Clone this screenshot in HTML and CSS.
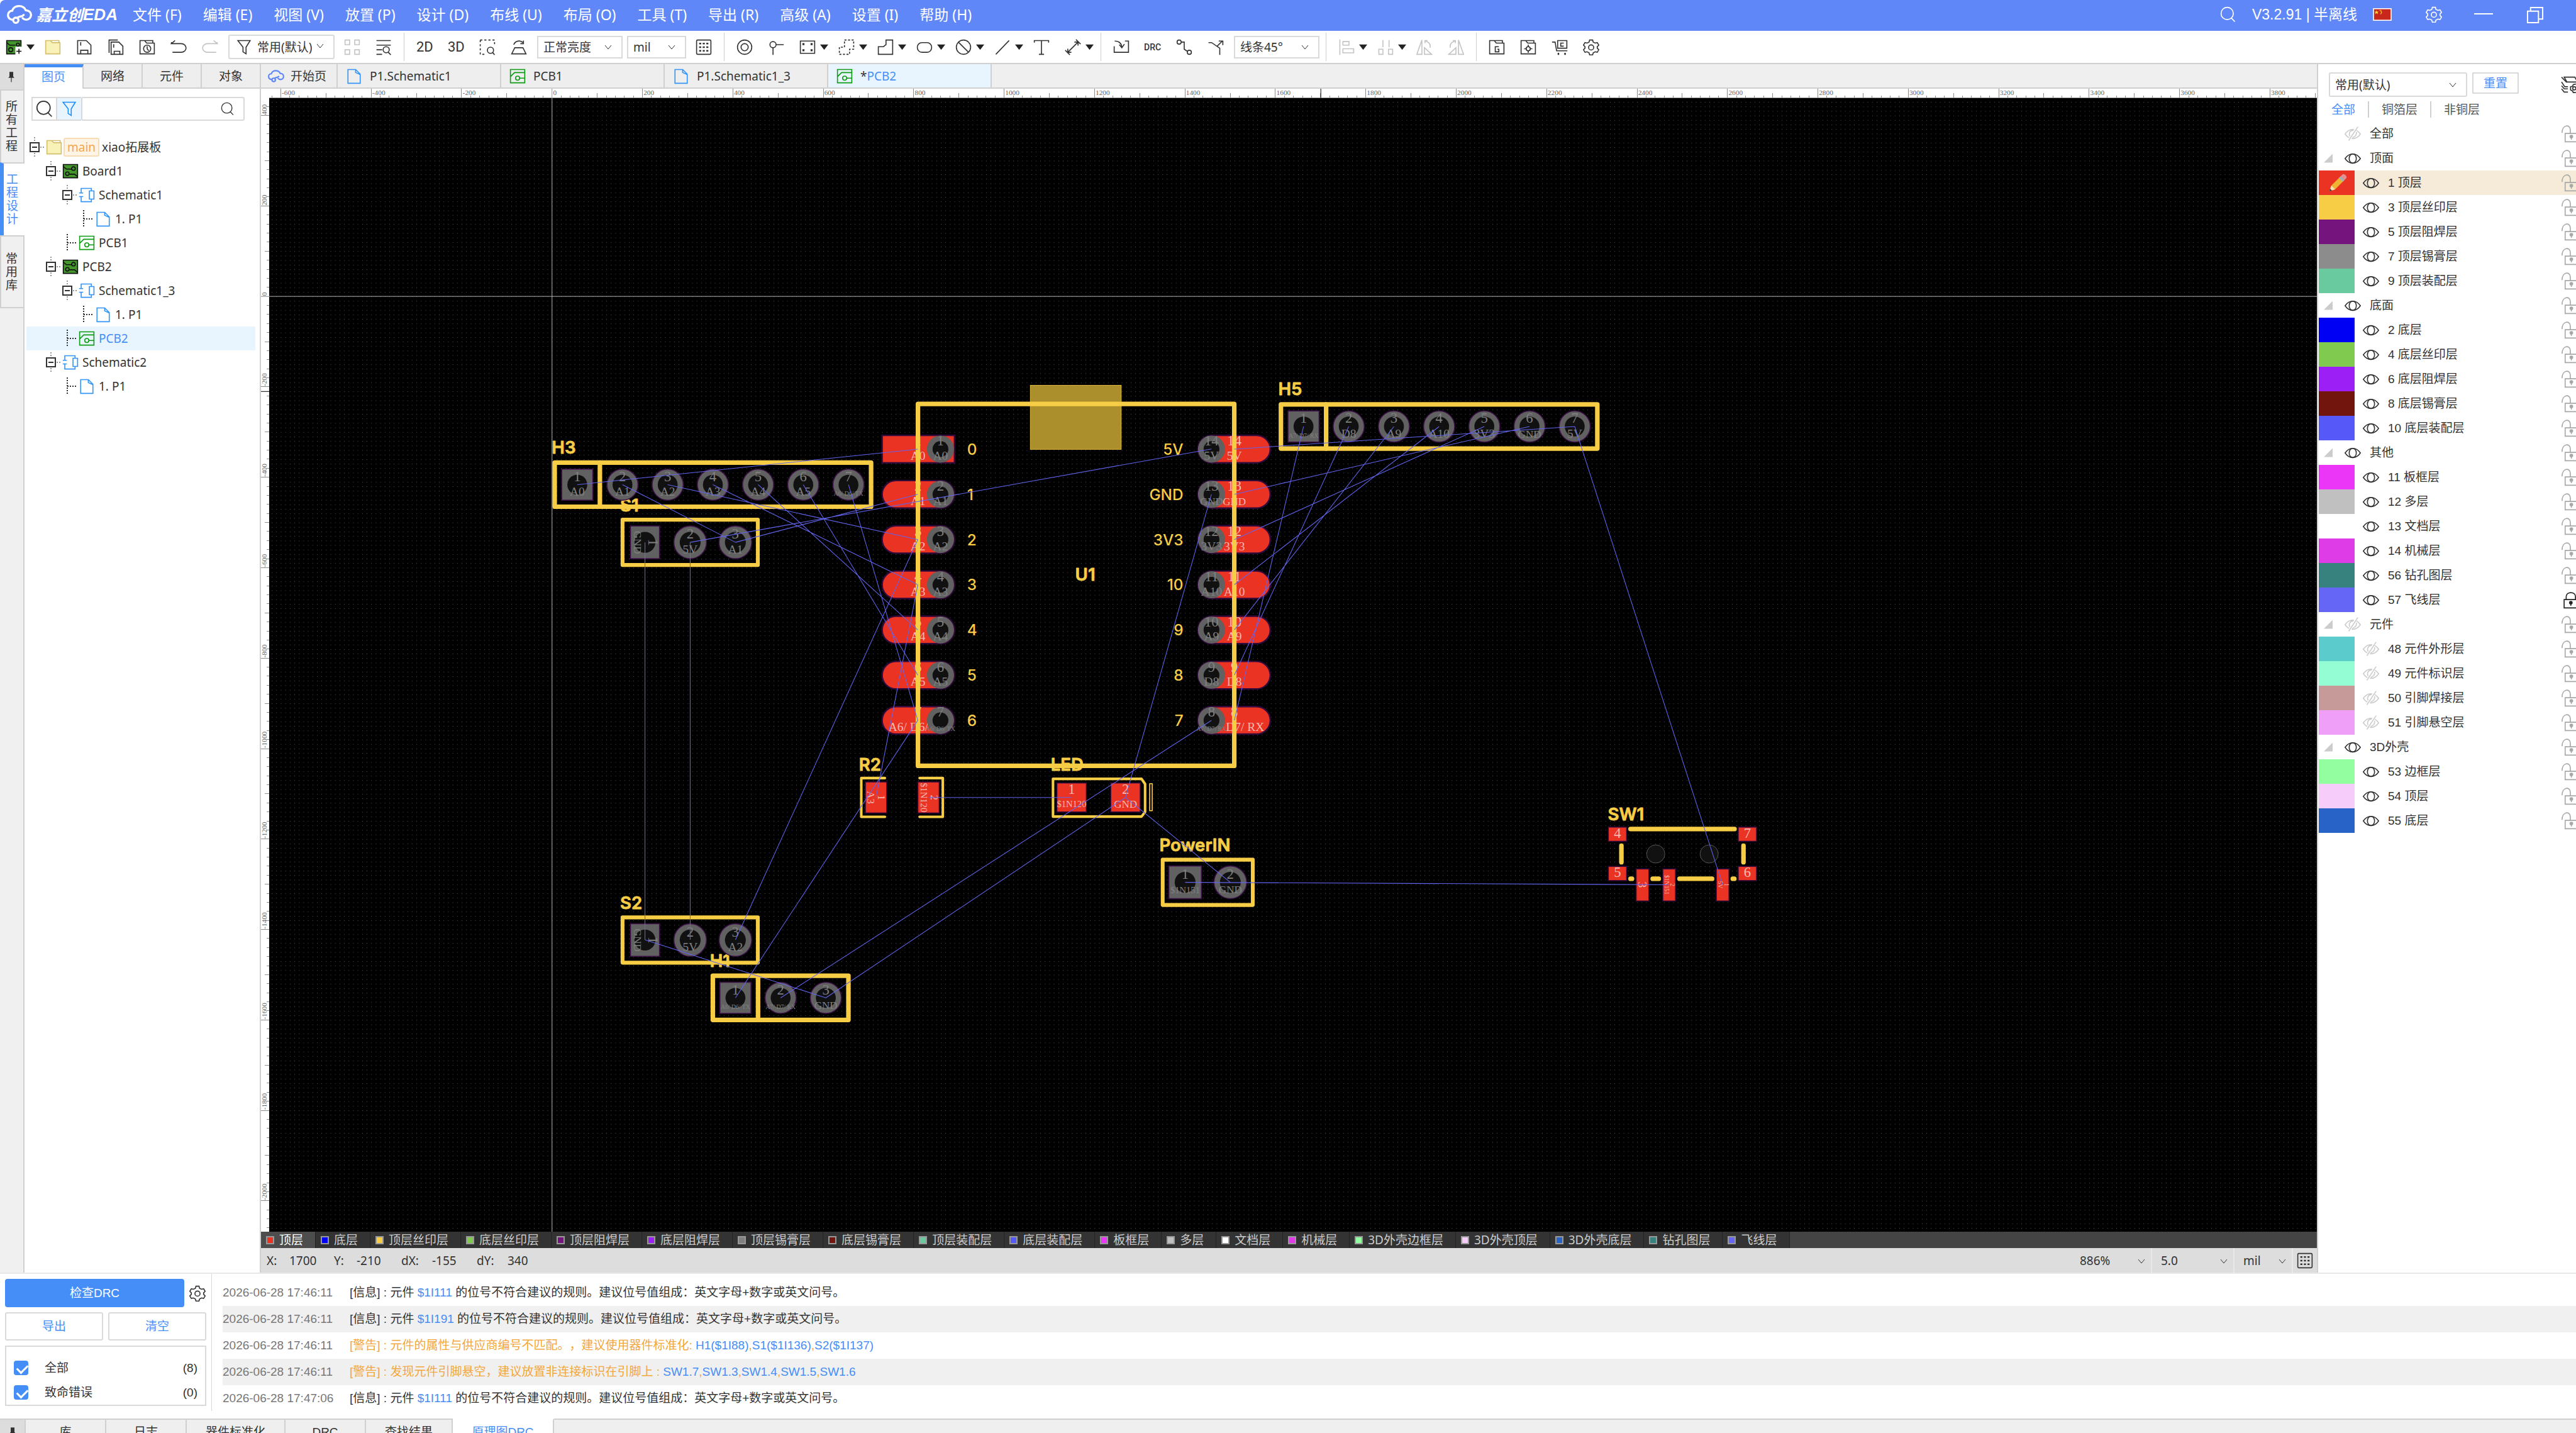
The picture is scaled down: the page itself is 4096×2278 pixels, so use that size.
FILE: index.html
```html
<!DOCTYPE html>
<html lang="zh-CN">
<head>
<meta charset="utf-8">
<title>嘉立创EDA</title>
<link rel="stylesheet" href="styles.css">
</head>
<body>
<svg class="defs" aria-hidden="true">
  <symbol id="cloud" viewBox="0 0 48 36"><path d="M10 28C4 27 2 23 2 19c0-5 4-8 8-8C12 5 17 2 23 2c7 0 11 3 13 8 6 0 10 4 10 9s-4 9-9 9c-3 0-5-1-7-3" fill="none" stroke="currentColor" stroke-width="4" stroke-linecap="round"/><circle cx="17" cy="29" r="5" fill="none" stroke="currentColor" stroke-width="4"/><path d="M20 25c2-5 8-1 12-6" fill="none" stroke="currentColor" stroke-width="4" stroke-linecap="round"/></symbol>
  <symbol id="search" viewBox="0 0 32 32"><ellipse cx="14" cy="14" rx="12" ry="12"/><path d="M22 23l7 7"/></symbol>
  <symbol id="gear" viewBox="0 0 32 32"><path d="M13 2h6l1 4 4 2 4-1 3 5-3 3v3l3 3-3 5-4-1-4 2-1 4h-6l-1-4-4-2-4 1-3-5 3-3v-3l-3-3 3-5 4 1 4-2z"/><circle cx="16" cy="16.500" r="5"/></symbol>
  <symbol id="down" viewBox="0 0 14 14"><path d="M2 4l5 6 5-6"/></symbol>
  <symbol id="caret" viewBox="0 0 14 14"><path d="M0 3h14L7 12z" fill="#222" stroke="none"/></symbol>
  <symbol id="board" viewBox="0 0 32 32"><path d="M2 3h28v26H2z" fill="#43962a" stroke="#111"/><path d="M2 7l6 5h11M30 27l-6-5H14" stroke="#111"/><circle cx="22" cy="11" r="3.500" stroke="#111"/><circle cx="10" cy="21" r="3.500" stroke="#111"/></symbol>
  <symbol id="newboard" viewBox="0 0 32 32"><path d="M2 3h28v26H2z" fill="#43962a" stroke="#111"/><path d="M2 7l6 5h11" stroke="#111"/><circle cx="24" cy="11" r="3" stroke="#111"/><circle cx="10" cy="21" r="4" stroke="#111"/><path d="M19 15h13v17H19z" fill="#fff" stroke="none"/><path d="M26 19v10M21 24h10" stroke="#111"/></symbol>
  <symbol id="folder" viewBox="0 0 32 32"><path d="M2 29V3h9l4 4h15v22z" fill="#f8f1b8" stroke="#d3c06c"/><path d="M11 3h17v4M15 7h15" stroke="#d3c06c"/></symbol>
  <symbol id="save" viewBox="0 0 32 32"><path d="M3 3h17l9 9v17H3zM9 29v-7h14v7M9 6v7"/></symbol>
  <symbol id="saveall" viewBox="0 0 32 32"><path d="M7 6h15l8 8v16H7zM13 30v-6h11v6M12 10v7M3 27V2h17"/></symbol>
  <symbol id="history" viewBox="0 0 32 32"><path d="M2 29V3h9l4 5h15v21zM12 3h15v5"/><circle cx="16" cy="19" r="7"/><path d="M16 14v5l3 4"/></symbol>
  <symbol id="undo" viewBox="0 0 32 32"><path d="M9 3L2 9h19a9 8 0 0 1 0 17H4M2 9V6"/></symbol>
  <symbol id="redo" viewBox="0 0 32 32"><path d="M23 3l7 6H11a9 8 0 0 0 0 17h17M30 9V6"/></symbol>
  <symbol id="funnel" viewBox="0 0 32 32"><path d="M4 3h24l-8 13v13l-6-4v-9z"/></symbol>
  <symbol id="four" viewBox="0 0 32 32"><path d="M2 2h9v9H2zM21 2h9v9h-9zM2 21h9v9H2zM21 21h9v9h-9z"/></symbol>
  <symbol id="findlist" viewBox="0 0 32 32"><path d="M2 3h28M2 12h28M2 21h11M2 30h11M25 26l5 5"/><circle cx="21" cy="21" r="6"/></symbol>
  <symbol id="area" viewBox="0 0 32 32"><path d="M2 2h28v10M2 2v28h11" stroke-dasharray="4 4"/><circle cx="22" cy="22" r="6"/><path d="M26 26l4 5"/></symbol>
  <symbol id="flip" viewBox="0 0 32 32"><path d="M8 17h16l6 12H2zM6 11c3-8 13-9 18-4M25 3v6h-6"/></symbol>
  <symbol id="grid" viewBox="0 0 32 32"><rect x="2" y="2" width="28" height="28" rx="2"/><path d="M7 9h20M7 16h20M7 23h20" stroke-width="3" stroke-dasharray="4 3"/></symbol>
  <symbol id="ring" viewBox="0 0 32 32"><circle cx="16" cy="16" r="14"/><circle cx="16" cy="16" r="7"/></symbol>
  <symbol id="via" viewBox="0 0 32 32"><circle cx="10" cy="11" r="6"/><path d="M16 11h15M10 17v14"/></symbol>
  <symbol id="pad" viewBox="0 0 32 32"><path d="M2 4h28v24H2z"/><path d="M6 10h4M22 10h4M6 22h4M22 22h4" stroke-width="4"/></symbol>
  <symbol id="dpoly" viewBox="0 0 32 32"><path d="M12 2h18v18h-8v10H2V16h10z" stroke-dasharray="4 3"/></symbol>
  <symbol id="poly" viewBox="0 0 32 32"><path d="M17 2h13v28H2V15h10l5-4z"/></symbol>
  <symbol id="round" viewBox="0 0 32 32"><rect x="2" y="7" width="28" height="19" rx="9"/></symbol>
  <symbol id="forbid" viewBox="0 0 32 32"><circle cx="16" cy="16" r="14"/><path d="M6 6l20 20"/></symbol>
  <symbol id="line" viewBox="0 0 32 32"><path d="M3 30L29 3"/></symbol>
  <symbol id="text" viewBox="0 0 32 32"><path d="M2 7V3h28v4M16 3v27M11 30h10"/></symbol>
  <symbol id="dim" viewBox="0 0 32 32"><path d="M6 26L26 6M26 13V6h-7M6 19v7h7M22 1l9 9M1 22l9 9"/></symbol>
  <symbol id="import" viewBox="0 0 32 32"><path d="M23 4h7v22H2V14M3 4c7 0 13 3 14 12M12 11l5 6 5-7"/></symbol>
  <symbol id="route" viewBox="0 0 32 32"><circle cx="6" cy="6" r="4"/><circle cx="26" cy="26" r="4"/><path d="M10 6h6v14l6 4"/></symbol>
  <symbol id="fork" viewBox="0 0 32 32"><path d="M2 7h6l16 11v13M18 15L29 4M22 4h8v8"/></symbol>
  <symbol id="align" viewBox="0 0 32 32"><path d="M3 1v30M9 5h12v7H9zM9 19h21v8H9z"/></symbol>
  <symbol id="dist" viewBox="0 0 32 32"><path d="M11 2v14M23 2v14M3 20h8v10H3zM22 20h8v10h-8z"/></symbol>
  <symbol id="mirror" viewBox="0 0 32 32"><path d="M11 2v28H1zM16 17l14 13H16zM18 4c7 2 10 7 9 13M22 3h-5v5"/></symbol>
  <symbol id="rotate" viewBox="0 0 32 32"><path d="M21 2v28h10zM16 17L2 30h14zM14 4C7 6 4 11 5 17M10 3h5v5"/></symbol>
  <symbol id="gfolder" viewBox="0 0 32 32"><path d="M2 29V3h9l4 5h15v21zM12 3h15v5M20 15h-7v10h7v-5h-3"/></symbol>
  <symbol id="tfolder" viewBox="0 0 32 32"><path d="M2 29V3h9l4 5h15v21zM12 3h15v5M16 11v4M16 23v4M8 19h4M20 19h4"/><circle cx="16" cy="19" r="4"/></symbol>
  <symbol id="cart" viewBox="0 0 32 32"><path d="M1 6h6l3 17h21M12 18V3h18v15zM24 8h-6v6h6"/><path d="M12 29h3M25 29h3" stroke-width="4"/></symbol>
  <symbol id="pin" viewBox="0 0 20 32"><path d="M5 3h10v12l3 4H2l3-4z" fill="#333" stroke="none"/><path d="M10 18v12"/></symbol>
  <symbol id="sheet" viewBox="0 0 32 32"><path d="M4 3h15l9 9v18H4zM19 3v6l9 4"/></symbol>
  <symbol id="pcb" viewBox="0 0 32 32"><path d="M2 3h28v26H2zM2 17l8-8h20M20 20h10"/><circle cx="16" cy="20" r="4"/></symbol>
  <symbol id="sch" viewBox="0 0 32 32"><path d="M5 11V3h20v4M5 20v9h20v-4M1 12h8M1 19h8M21 8h9v16h-9z"/></symbol>
  <symbol id="minus" viewBox="0 0 26 38"><path d="M1 12h14v14H1zM4 19h8"/><path d="M8 3v8M8 28v8M17 19h8" stroke="#999" stroke-dasharray="2 2"/></symbol>
  <symbol id="leaf" viewBox="0 0 26 38"><path d="M8 5v28M8 19h15" stroke-dasharray="2 2"/></symbol>
  <symbol id="eye" viewBox="0 0 32 32"><path d="M1 16C9 4 23 4 31 16 23 28 9 28 1 16z"/><ellipse cx="16" cy="16" rx="7" ry="9"/></symbol>
  <symbol id="eyeoff" viewBox="0 0 32 32"><path d="M1 16C9 4 23 4 31 16 23 28 9 28 1 16zM20 9C9 7 7 18 12 22M23 12c1 5-2 10-8 11"/><path d="M25 1L8 30" stroke="#fff" stroke-width="5"/><path d="M26 2L8 29"/></symbol>
  <symbol id="unlock" viewBox="0 0 28 34"><path d="M1 15C1-2 17-2 17 9v7M7 16h28v16H7z"/><circle cx="19" cy="22" r="2.500" fill="currentColor"/><path d="M19 24v4"/></symbol>
  <symbol id="lock" viewBox="0 0 28 34"><path d="M9 16V10C9 0 27 0 27 10v6M5 16h28v16H5z"/><circle cx="18" cy="22" r="2.500" fill="currentColor"/><path d="M18 24v4"/></symbol>
  <symbol id="layers" viewBox="0 0 28 32"><path d="M6 2h20l5 9H11zM1 2l9 9h20M1 11l6 9h6M1 18l5 6h7M1 24l5 6h7"/><circle cx="25" cy="23" r="3"/><path d="M28 15l-5 1-1 3-4 1v6l4 2 1 3h5"/></symbol>
</svg>
<div class="app">
  <header class="titlebar">
    <div class="logo"><svg class="logo-mark"><use href="#cloud"/></svg><span class="logo-cn">嘉立创</span><span class="logo-en">EDA</span></div>
    <nav class="menu">
      <button>文件 (F)</button><button>编辑 (E)</button><button>视图 (V)</button><button>放置 (P)</button><button>设计 (D)</button><button>布线 (U)</button><button>布局 (O)</button><button>工具 (T)</button><button>导出 (R)</button><button>高级 (A)</button><button>设置 (I)</button><button>帮助 (H)</button>
    </nav>
    <div class="window-tools">
      <button aria-label="搜索"><svg class="icon"><use href="#search"/></svg></button>
      <span class="version">V3.2.91 | 半离线</span>
      <svg class="flag" viewBox="0 0 37 25"><rect width="37" height="25" fill="#fff"/><rect x="2" y="2" width="33" height="21" fill="#c8281c"/><path d="M7 4l1 3h3l-2 2 1 3-3-2-3 2 1-3-2-2h3z" fill="#ffd43b"/><path d="M13 4l3 1 1 4-2 3" fill="none" stroke="#f0a52d" stroke-width="2"/></svg>
      <button class="t-gear" aria-label="设置"><svg class="icon"><use href="#gear"/></svg></button>
      <button class="t-min" aria-label="最小化"><svg viewBox="0 0 30 26"><path d="M0 12h30"/></svg></button>
      <button class="t-max" aria-label="还原"><svg viewBox="0 0 28 28"><path d="M2 8h18v19H2zM7 8V2h20v19h-7"/></svg></button>
    </div>
  </header>

  <div class="toolbar" role="toolbar">
    <button class="tb first" aria-label="新建"><svg class="icon"><use href="#newboard"/></svg><svg class="caret"><use href="#caret"/></svg></button>
    <button class="tb" aria-label="打开"><svg class="icon"><use href="#folder"/></svg></button>
    <button class="tb" aria-label="保存"><svg class="icon"><use href="#save"/></svg></button>
    <button class="tb" aria-label="全部保存"><svg class="icon"><use href="#saveall"/></svg></button>
    <button class="tb" aria-label="历史"><svg class="icon"><use href="#history"/></svg></button>
    <button class="tb" aria-label="撤销"><svg class="icon"><use href="#undo"/></svg></button>
    <button class="tb off" aria-label="重做"><svg class="icon"><use href="#redo"/></svg></button>
    <label class="pick pick-filter"><svg class="icon"><use href="#funnel"/></svg><select aria-label="过滤"><option>常用(默认)</option></select><svg class="down"><use href="#down"/></svg></label>
    <button class="tb off" aria-label="组合"><svg class="icon"><use href="#four"/></svg></button>
    <button class="tb" aria-label="查找"><svg class="icon"><use href="#findlist"/></svg></button>
    <i class="sep"></i>
    <button class="tb word">2D</button>
    <button class="tb word">3D</button>
    <button class="tb" aria-label="框选查找"><svg class="icon"><use href="#area"/></svg></button>
    <button class="tb" aria-label="翻板"><svg class="icon"><use href="#flip"/></svg></button>
    <label class="pick pick-bright"><select aria-label="亮度"><option>正常亮度</option></select><svg class="down"><use href="#down"/></svg></label>
    <label class="pick pick-unit"><select aria-label="单位"><option>mil</option></select><svg class="down"><use href="#down"/></svg></label>
    <button class="tb" aria-label="网格"><svg class="icon"><use href="#grid"/></svg></button>
    <i class="sep"></i>
    <button class="tb" aria-label="焊盘"><svg class="icon"><use href="#ring"/></svg></button>
    <button class="tb" aria-label="过孔"><svg class="icon"><use href="#via"/></svg></button>
    <button class="tb drop" aria-label="器件"><svg class="icon"><use href="#pad"/></svg><svg class="caret"><use href="#caret"/></svg></button>
    <button class="tb drop" aria-label="铺铜区域"><svg class="icon"><use href="#dpoly"/></svg><svg class="caret"><use href="#caret"/></svg></button>
    <button class="tb drop" aria-label="填充区域"><svg class="icon"><use href="#poly"/></svg><svg class="caret"><use href="#caret"/></svg></button>
    <button class="tb drop" aria-label="槽孔"><svg class="icon"><use href="#round"/></svg><svg class="caret"><use href="#caret"/></svg></button>
    <button class="tb drop" aria-label="禁止区域"><svg class="icon"><use href="#forbid"/></svg><svg class="caret"><use href="#caret"/></svg></button>
    <button class="tb drop" aria-label="线条"><svg class="icon"><use href="#line"/></svg><svg class="caret"><use href="#caret"/></svg></button>
    <button class="tb" aria-label="文本"><svg class="icon"><use href="#text"/></svg></button>
    <button class="tb drop" aria-label="尺寸"><svg class="icon"><use href="#dim"/></svg><svg class="caret"><use href="#caret"/></svg></button>
    <i class="sep"></i>
    <button class="tb" aria-label="导入变更"><svg class="icon"><use href="#import"/></svg></button>
    <button class="tb drc">DRC</button>
    <button class="tb" aria-label="布线"><svg class="icon"><use href="#route"/></svg></button>
    <button class="tb" aria-label="优化"><svg class="icon"><use href="#fork"/></svg></button>
    <label class="pick pick-angle"><select aria-label="拐角"><option>线条45°</option></select><svg class="down"><use href="#down"/></svg></label>
    <i class="sep"></i>
    <button class="tb drop off" aria-label="对齐"><svg class="icon"><use href="#align"/></svg><svg class="caret"><use href="#caret"/></svg></button>
    <button class="tb drop off" aria-label="分布"><svg class="icon"><use href="#dist"/></svg><svg class="caret"><use href="#caret"/></svg></button>
    <button class="tb off" aria-label="左转"><svg class="icon"><use href="#mirror"/></svg></button>
    <button class="tb off" aria-label="右转"><svg class="icon"><use href="#rotate"/></svg></button>
    <i class="sep"></i>
    <button class="tb" aria-label="Gerber"><svg class="icon"><use href="#gfolder"/></svg></button>
    <button class="tb" aria-label="坐标"><svg class="icon"><use href="#tfolder"/></svg></button>
    <button class="tb" aria-label="下单"><svg class="icon"><use href="#cart"/></svg></button>
    <button class="tb" aria-label="设置"><svg class="icon"><use href="#gear"/></svg></button>
  </div>

  <main class="main">
    <nav class="rail">
      <button class="rail-pin" aria-label="固定"><svg class="pin"><use href="#pin"/></svg></button>
      <button class="rail-tab"><span>所有工程</span></button>
      <button class="rail-tab on"><span>工程设计</span></button>
      <button class="rail-tab"><span>常用库</span></button>
    </nav>
    <section class="project">
      <div class="side-tabs"><button class="on">图页</button><button>网络</button><button>元件</button><button>对象</button></div>
      <div class="search">
        <button aria-label="搜索"><svg class="icon big"><use href="#search"/></svg></button>
        <button class="on" aria-label="过滤"><svg class="icon"><use href="#funnel"/></svg></button>
        <label class="field"><input type="text" aria-label="搜索图页"><svg class="icon small"><use href="#search"/></svg></label>
      </div>
      <ul class="tree">
        <li class="l0"><svg class="node"><use href="#minus"/></svg><svg class="icon"><use href="#folder"/></svg><span class="badge">main</span><span>xiao拓展板</span></li>
        <li class="l1"><svg class="node"><use href="#minus"/></svg><svg class="icon"><use href="#board"/></svg><span>Board1</span></li>
        <li class="l2"><svg class="node"><use href="#minus"/></svg><svg class="icon blue"><use href="#sch"/></svg><span>Schematic1</span></li>
        <li class="l3"><svg class="node"><use href="#leaf"/></svg><svg class="icon blue"><use href="#sheet"/></svg><span>1. P1</span></li>
        <li class="l2"><svg class="node"><use href="#leaf"/></svg><svg class="icon green"><use href="#pcb"/></svg><span>PCB1</span></li>
        <li class="l1"><svg class="node"><use href="#minus"/></svg><svg class="icon"><use href="#board"/></svg><span>PCB2</span></li>
        <li class="l2"><svg class="node"><use href="#minus"/></svg><svg class="icon blue"><use href="#sch"/></svg><span>Schematic1_3</span></li>
        <li class="l3"><svg class="node"><use href="#leaf"/></svg><svg class="icon blue"><use href="#sheet"/></svg><span>1. P1</span></li>
        <li class="l2 on"><svg class="node"><use href="#leaf"/></svg><svg class="icon green"><use href="#pcb"/></svg><span>PCB2</span></li>
        <li class="l1"><svg class="node"><use href="#minus"/></svg><svg class="icon blue"><use href="#sch"/></svg><span>Schematic2</span></li>
        <li class="l2"><svg class="node"><use href="#leaf"/></svg><svg class="icon blue"><use href="#sheet"/></svg><span>1. P1</span></li>
      </ul>
    </section>
    <section class="editor">
      <div class="doc-tabs">
        <button class="home"><svg class="icon cloud"><use href="#cloud"/></svg><span>开始页</span></button>
        <button><svg class="icon blue"><use href="#sheet"/></svg><span>P1.Schematic1</span></button>
        <button><svg class="icon green"><use href="#pcb"/></svg><span>PCB1</span></button>
        <button><svg class="icon blue"><use href="#sheet"/></svg><span>P1.Schematic1_3</span></button>
        <button class="on"><svg class="icon green"><use href="#pcb"/></svg><span><b>*</b>PCB2</span></button>
      </div>
      <div class="canvas"><svg id="board-view" viewBox="512 174 4030 2240" preserveAspectRatio="xMinYMin slice"></svg></div>
      <div class="layer-bar" id="layer-bar"></div>
      <div class="status">
        <span class="k">X:</span><span class="v">1700</span><span class="k">Y:</span><span class="v">-210</span><span class="k w">dX:</span><span class="v">-155</span><span class="k w">dY:</span><span class="v">340</span>
        <label class="st st-zoom"><select aria-label="缩放"><option>886%</option></select><svg class="down"><use href="#down"/></svg></label>
        <label class="st st-grid"><select aria-label="栅格"><option>5.0</option></select><svg class="down"><use href="#down"/></svg></label>
        <label class="st st-unit"><select aria-label="单位"><option>mil</option></select><svg class="down"><use href="#down"/></svg></label>
        <button class="st-btn" aria-label="网格"><svg class="icon"><use href="#grid"/></svg></button>
      </div>
    </section>
    <aside class="layers">
      <div class="layers-head">
        <label class="pick"><select aria-label="图层方案"><option>常用(默认)</option></select><svg class="down"><use href="#down"/></svg></label>
        <button class="reset">重置</button>
        <svg class="edge"><use href="#layers"/></svg>
      </div>
      <div class="layers-tabs"><button class="on">全部</button><button>铜箔层</button><button>非铜层</button></div>
      <div id="layer-list"></div>
    </aside>
  </main>

  <section class="drc-panel">
    <div class="drc-body">
      <div class="drc-side">
        <div class="drc-row"><button class="primary">检查DRC</button><button class="plain" aria-label="规则设置"><svg class="icon"><use href="#gear"/></svg></button></div>
        <div class="drc-row"><button class="ghost">导出</button><button class="ghost">清空</button></div>
        <div class="drc-filter">
          <label><input type="checkbox" checked><span>全部</span><em>(8)</em></label>
          <label><input type="checkbox" checked><span>致命错误</span><em>(0)</em></label>
        </div>
      </div>
      <ol class="log">
        <li><time>2026-06-28 17:46:11</time><p>[信息] : 元件 <a href="#">$1I111</a> 的位号不符合建议的规则。建议位号值组成：英文字母+数字或英文问号。</p></li>
        <li><time>2026-06-28 17:46:11</time><p>[信息] : 元件 <a href="#">$1I191</a> 的位号不符合建议的规则。建议位号值组成：英文字母+数字或英文问号。</p></li>
        <li class="warn"><time>2026-06-28 17:46:11</time><p>[警告] : 元件的属性与供应商编号不匹配。，建议使用器件标准化: <a href="#">H1($1I88)</a>,<a href="#">S1($1I136)</a>,<a href="#">S2($1I137)</a></p></li>
        <li class="warn"><time>2026-06-28 17:46:11</time><p>[警告] : 发现元件引脚悬空，建议放置非连接标识在引脚上 : <a href="#">SW1.7</a>,<a href="#">SW1.3</a>,<a href="#">SW1.4</a>,<a href="#">SW1.5</a>,<a href="#">SW1.6</a></p></li>
        <li><time>2026-06-28 17:47:06</time><p>[信息] : 元件 <a href="#">$1I111</a> 的位号不符合建议的规则。建议位号值组成：英文字母+数字或英文问号。</p></li>
      </ol>
    </div>
    <div class="dock-tabs"><button class="dock-pin" aria-label="固定"><svg class="pin"><use href="#pin"/></svg></button><button class="w1">库</button><button class="w1">日志</button><button class="w2">器件标准化</button><button class="w1">DRC</button><button class="w3">查找结果</button><button class="w4 on">原理图DRC</button></div>
  </section>
</div>
<script src="script.js"></script>
</body>
</html>
```

FILE: styles.css
```css
* { box-sizing: border-box; margin: 0; padding: 0; }
body { font: 19px/24px "Noto Sans", "Noto Sans CJK SC", sans-serif; color: #333; background: #fff; overflow: hidden; text-spacing-trim: space-all; }
button, select, input { font: inherit; color: inherit; background: none; border: 0; border-radius: 0; outline: 0; }
button { cursor: pointer; }
select { appearance: none; cursor: pointer; }
a { color: #458ef7; text-decoration: none; }
svg { display: block; flex: none; fill: none; stroke: currentColor; stroke-width: 2; }
.defs { position: absolute; width: 0; height: 0; }
.icon { width: 26px; height: 26px; }
.down { width: 14px; height: 14px; stroke-width: 1; }
.caret { width: 13px; height: 13px; }
.pin { width: 12px; height: 20px; color: #333; }
.blue { color: #3395f8; }
.green { color: #0c9d12; }
.app { display: flex; flex-direction: column; height: 100vh; }

/* title bar */
.titlebar { flex: none; display: flex; align-items: center; height: 49px; padding-bottom: 3px; background: #5f87f8; color: #fff; font-size: 23px; border-top-left-radius: 8px; }
.logo { display: flex; align-items: center; padding-left: 11px; width: 211px; font-weight: 700; font-style: italic; }
.logo-mark { width: 40px; height: 30px; margin-right: 6px; }
.logo-en { font: italic 700 26px/32px "Liberation Sans", sans-serif; }
.logo-cn { font-size: 25px; }
.menu { display: flex; gap: 34px; }
.menu button { white-space: nowrap; }
.window-tools { display: flex; align-items: center; margin-left: auto; padding-right: 52px; font-family: "Liberation Sans", "Noto Sans CJK SC", sans-serif; }
.version { margin-left: 25px; }
.flag { width: 30px; height: 20px; margin-left: 25px; stroke: none; }
.t-gear { margin-left: 54px; }
.t-min { margin-left: 51px; }
.t-min svg { width: 30px; height: 26px; }
.t-max { margin-left: 53px; }
.t-max svg { width: 27px; height: 27px; }

/* toolbar */
.toolbar { flex: none; display: flex; align-items: center; height: 53px; border-bottom: 2px solid #d0d0d0; }
.tb { flex: none; display: flex; align-items: center; width: 50px; height: 42px; padding-left: 12px; }
.tb.first { width: 59px; padding-left: 9px; gap: 7px; }
.tb.drop { width: 62px; gap: 7px; }
.tb.off .icon { color: #c4c4c4; }
.tb.word { font: 22px/26px Roboto, sans-serif; }
.tb.drc { font: 500 14px/20px Roboto, sans-serif; padding-left: 11px; }
.sep { flex: none; width: 1px; height: 45px; margin: 0 7px; background: #ccc; }
.pick { position: relative; flex: none; display: flex; align-items: center; height: 36px; border: 2px solid #d9d9d9; }
.pick select { flex: 1; min-width: 0; height: 100%; padding-left: 8px; }
.pick .down { position: absolute; right: 14px; top: 9px; pointer-events: none; }
.pick-filter { width: 169px; height: 39px; margin: 0 3px 0 4px; border-radius: 3px; padding-left: 10px; }
.pick-bright { width: 136px; margin: 0 7px 0 4px; }
.pick-unit { width: 94px; margin-right: 3px; }
.pick-angle { width: 136px; margin: 0 3px 0 4px; }

/* left rail and project tree */
.main { flex: 1; min-height: 0; display: flex; }
.rail { flex: none; width: 39px; background: #f0f0f0; border-right: 2px solid #d0d0d0; }
.rail-pin { display: flex; align-items: center; justify-content: center; width: 37px; height: 40px; padding-right: 2px; background: #ddd; }
.rail-tab { display: flex; align-items: center; justify-content: center; width: 37px; height: 116px; border: solid #d0d0d0; border-width: 2px 0 0 2px; }
.rail-tab span { width: 19px; margin-right: 2px; line-height: 21px; word-break: break-all; }
.rail-tab.on { width: 39px; background: #fff; color: #458ef7; border-left: 6px solid #458ef7; }
.rail-tab.on span { margin-right: 6px; }
.rail-tab:last-child { border-bottom-width: 2px; }
.project { flex: none; width: 376px; border-right: 2px solid #d0d0d0; }
.side-tabs { display: flex; height: 39px; }
.side-tabs button { flex: 1; background: #eee; border-right: 2px solid #d0d0d0; border-bottom: 2px solid #d0d0d0; }
.side-tabs button:last-child { border-right: 0; }
.side-tabs .on { background: #fff; color: #458ef7; border-top: 5px solid #458ef7; border-bottom: 0; padding-bottom: 4px; }
.search { display: flex; height: 38px; margin: 13px 24px 23px 11px; }
.search > button { flex: none; display: flex; align-items: center; justify-content: center; width: 39px; border: solid #d9d9d9; border-width: 2px 0 2px 2px; }
.search > .on { width: 40px; background: #e8f4fe; color: #1b8ffa; }
.search .big { width: 30px; height: 28px; }
.search .small { width: 22px; height: 22px; }
.field { flex: 1; min-width: 0; display: flex; align-items: center; padding-right: 14px; border: 2px solid #d9d9d9; border-radius: 3px; }
.field input { flex: 1; min-width: 0; width: 100%; height: 100%; padding-left: 8px; }
.tree { list-style: none; }
.tree li { display: flex; align-items: center; height: 38px; margin: 0 7px 0 3px; }
.tree span { margin-left: 6px; white-space: nowrap; }
.tree .on { background: #e8f5fe; }
.tree .on span { color: #458ef7; }
.node { width: 26px; height: 38px; }
.tree .l0 { padding-left: 5px; }
.tree .l1 { padding-left: 31px; }
.tree .l2 { padding-left: 57px; }
.tree .l3 { padding-left: 83px; }
.tree .badge { margin-left: 2px; margin-right: -2px; padding: 1px 4px; color: #f5a54a; background: #fef4e6; border: 2px solid #fadcb4; border-radius: 3px; }

/* editor */
.editor { flex: 1; min-width: 0; display: flex; flex-direction: column; }
.doc-tabs { flex: none; display: flex; height: 39px; background: #efefef; border-bottom: 2px solid #d0d0d0; }
.doc-tabs button { display: flex; align-items: center; width: 260px; padding-left: 13px; border-right: 2px solid #d0d0d0; gap: 12px; background: #eee; }
.doc-tabs .home { width: 122px; padding-left: 11px; gap: 10px; }
.doc-tabs .cloud { color: #5f87f8; height: 22px; }
.doc-tabs .on { background: #e8f5fe; color: #458ef7; }
.doc-tabs b { font-weight: 400; color: #333; }
.canvas { flex: 1; min-height: 0; background: #000; }
.canvas svg { width: 100%; height: 100%; stroke: none; }
.layer-bar { flex: none; display: flex; height: 26px; background: #444; color: #ccc; overflow: hidden; }
.layer-bar button { display: flex; align-items: center; gap: 8px; padding: 0 19px 0 8px; background: #333; border-right: 1px solid #222; white-space: nowrap; }
.layer-bar button.on { background: #4d4d4d; color: #fff; }
.layer-bar i { width: 13px; height: 13px; border: 2px solid #999; }
.status { flex: none; display: flex; align-items: center; height: 39px; padding-left: 9px; background: #ddd; }
.status .k { width: 36px; }
.status .k.w { width: 49px; }
.status .v { width: 71px; }
.st { position: relative; display: flex; height: 39px; border-right: 2px solid #e8e8e8; }
.st select { width: 100%; padding-left: 14px; }
.st .down { position: absolute; right: 8px; top: 14px; pointer-events: none; }
.st-zoom { width: 129px; margin-left: auto; }
.st-grid { width: 131px; }
.st-unit { width: 93px; }
.st-btn { padding: 0 6px; }

/* layer panel */
.layers { flex: none; width: 412px; border-left: 2px solid #d0d0d0; padding-left: 1px; overflow: hidden; }
.layers-head { display: flex; align-items: flex-start; height: 52px; padding: 13px 0 0 16px; }
.layers-head .pick { width: 220px; height: 39px; margin-right: 8px; border-radius: 3px; }
.layers-head .pick .down { top: 11px; }
.reset { width: 74px; height: 34px; border: 2px solid #d9d9d9; color: #458ef7; }
.edge { width: 24px; height: 27px; margin: 6px 0 0 auto; }
.layers-tabs { display: flex; align-items: center; height: 39px; }
.layers-tabs button { height: 26px; padding: 0 20px; border-right: 2px solid #d0d0d0; color: #555; }
.layers-tabs button:last-child { border: 0; }
.layers-tabs .on { color: #458ef7; }
.layer { display: flex; align-items: center; height: 39px; font-family: "Liberation Sans", "Noto Sans CJK SC", sans-serif; }
.layer .swatch { display: flex; align-items: center; justify-content: center; width: 57px; height: 39px; margin-right: 13px; }
.layer .swatch svg { width: 32px; height: 32px; stroke: none; }
.layer .name { margin-left: 14px; }
.layer.group { padding-left: 8px; }
.layer.group i { width: 14px; height: 14px; margin-right: 19px; background: #ccc; clip-path: polygon(100% 0, 100% 100%, 0 100%); }
.layer.group.all i { visibility: hidden; }
.layer.active { background: #f6ead9; }
.layer .hidden { color: #ccc; }
.layer .guard { width: 23px; height: 28px; margin-left: auto; color: #a8a8a8; }
.layer .guard.locked { color: #222; }

/* DRC panel */
.drc-panel { flex: none; height: 255px; border-top: 2px solid #e8e8e8; overflow: hidden; font-family: "Liberation Sans", "Noto Sans CJK SC", sans-serif; background: #fff; }
.drc-body { display: flex; height: 218px; margin-bottom: 12px; }
.drc-side { flex: none; display: flex; flex-direction: column; gap: 8px; width: 337px; padding: 8px; border-right: 1px solid #d9d9d9; }
.drc-row { display: flex; gap: 8px; height: 45px; }
.primary { flex: 1; background: #458ef7; color: #fff; border-radius: 4px; }
.plain { width: 27px; }
.ghost { flex: 1; border: 2px solid #d9d9d9; border-radius: 3px; color: #458ef7; }
.drc-filter { flex: 1; padding: 14px 12px 0; border: 2px solid #d9d9d9; }
.drc-filter label { display: flex; align-items: center; height: 39px; }
.drc-filter span { flex: 1; margin-left: 26px; }
.drc-filter em { font-style: normal; }
.drc-filter input { appearance: none; position: relative; width: 23px; height: 23px; border-radius: 4px; background: #458ef7; }
.drc-filter input::after { content: ""; position: absolute; left: 8px; top: 3px; width: 8px; height: 14px; border: solid #fff; border-width: 0 3px 3px 0; transform: rotate(45deg); }
.log { flex: 1; list-style: none; padding: 9px 0 0 17px; }
.log li { display: flex; align-items: center; height: 42px; white-space: nowrap; }
.log li:nth-child(even) { background: #f0f0f0; }
.log time { width: 202px; color: #777; }
.log .warn { color: #f3a63c; }
.log .warn time { color: #777; }
.dock-tabs { display: flex; height: 40px; background: #efefef; }
.dock-tabs button { border: solid #d0d0d0; border-width: 2px 2px 0 0; padding-top: 2px; }
.dock-tabs::after { content: ""; flex: 1; border-top: 2px solid #d0d0d0; }
.dock-pin { display: flex; align-items: center; justify-content: center; width: 41px; background: #ddd; }
.w1 { width: 128px; }
.w2 { width: 157px; }
.w3 { width: 138px; }
.w4 { width: 161px; }
.dock-tabs .on { background: #fff; color: #458ef7; border-top-color: #fff; }

/* board drawing */
.silk { fill: none; stroke: #f8cd46; stroke-linejoin: round; stroke-linecap: round; }
.ref { font: 600 34px Inter, sans-serif; fill: #f8cd46; }
.pinname { font: 500 30px Inter, sans-serif; fill: #f8cd46; }
.n28 { font: 28px "Liberation Serif", serif; }
.n24 { font: 24px "Liberation Serif", serif; }
.n21 { font: 21px "Liberation Serif", serif; }
.n18 { font: 18px "Liberation Serif", serif; }
.n12 { font: 12px "Liberation Serif", serif; }
.on-grey { fill: #808080; text-anchor: middle; }
.on-red { fill: #f7b9b4; text-anchor: middle; }
.tick { font: 14px "Liberation Serif", serif; fill: #666; }
.rats { fill: none; stroke: #6264ee; stroke-width: 1.3; }
```

FILE: script.js
```js
/* layer panel and layer bar */
const LAYERS = [
  ['全部', null, 0],
  ['顶面', null, 1],
  ['1 顶层', '#ea3323', 1], ['3 顶层丝印层', '#f8cd46', 1], ['5 顶层阻焊层', '#75147c', 1], ['7 顶层锡膏层', '#8c8c8c', 1], ['9 顶层装配层', '#69c99f', 1],
  ['底面', null, 1],
  ['2 底层', '#0000f5', 1], ['4 底层丝印层', '#80ca4f', 1], ['6 底层阻焊层', '#9c20f5', 1], ['8 底层锡膏层', '#72150c', 1], ['10 底层装配层', '#5658f7', 1],
  ['其他', null, 1],
  ['11 板框层', '#eb36f7', 1], ['12 多层', '#c0c0c0', 1], ['13 文档层', '#ffffff', 1], ['14 机械层', '#dd3ce6', 1], ['56 钻孔图层', '#37817e', 1], ['57 飞线层', '#6565f6', 1, 'lock'],
  ['元件', null, 0],
  ['48 元件外形层', '#5ccbcc', 0], ['49 元件标识层', '#94fdd3', 0], ['50 引脚焊接层', '#c59a99', 0], ['51 引脚悬空层', '#f09ff8', 0],
  ['3D外壳', null, 1],
  ['53 边框层', '#92fe9f', 1], ['54 顶层', '#f6cdfa', 1], ['55 底层', '#2864c7', 1]
];
const pencil = '<svg viewBox="0 0 32 32"><path d="M4 29l3-9 15-15 6 6-15 15z" fill="#f0b434"/><path d="M7 20l6 6-9 3z" fill="#f4deb4"/><path d="M4 29l1-4 3 3z" fill="#333"/><path d="M19 8l3-3 6 6-3 3z" fill="#a9adb5"/><path d="M22 5l3-3c3-1 7 3 6 6l-3 3z" fill="#e58f92"/></svg>';
const guard = l => `<svg class="guard ${l ? 'locked' : ''}"><use href="#${l ? 'lock' : 'unlock'}"/></svg>`;
document.getElementById('layer-list').innerHTML = LAYERS.map(([name, color, shown, lock], i) => {
  const eye = `<svg class="icon ${shown ? '' : 'hidden'}"><use href="#${shown ? 'eye' : 'eyeoff'}"/></svg>`;
  return color
    ? `<div class="layer ${i === 2 ? 'active' : ''}"><span class="swatch" style="background:${color}">${i === 2 ? pencil : ''}</span>${eye}<span class="name">${name}</span>${guard(lock)}</div>`
    : `<div class="layer group ${i ? '' : 'all'}"><i></i>${eye}<span class="name">${name}</span>${guard()}</div>`;
}).join('');

const BAR = [['顶层', '#ea3323'], ['底层', '#0000f5'], ['顶层丝印层', '#f8cd46'], ['底层丝印层', '#80ca4f'], ['顶层阻焊层', '#75147c'], ['底层阻焊层', '#9c20f5'], ['顶层锡膏层', '#808080'], ['底层锡膏层', '#72150c'], ['顶层装配层', '#69c99f'], ['底层装配层', '#5658f7'], ['板框层', '#eb36f7'], ['多层', '#c0c0c0'], ['文档层', '#ffffff'], ['机械层', '#dd3ce6'], ['3D外壳边框层', '#92fe9f'], ['3D外壳顶层', '#f6cdfa'], ['3D外壳底层', '#2864c7'], ['钻孔图层', '#37817e'], ['飞线层', '#6565f6']];
document.getElementById('layer-bar').innerHTML = BAR.map(([n, c], i) => `<button class="${i ? '' : 'on'}"><i style="background:${c}"></i>${n}</button>`).join('');

/* board canvas: origin and scale of the mil grid in drawing units */
const OX = 1082.5, OY = 581, K = 0.8862;
const L = 528, T = 192, R = 4542, B = 2414;
const red = [], silk = [], multi = [], labels = [];
const rect = (x, y, w, h, a) => `<rect x="${x}" y="${y}" width="${w}" height="${h}" ${a}/>`;
const txt = (x, y, s, cls, a = '') => `<text x="${x}" y="${y}" class="${cls}" ${a}>${s}</text>`;
const netClass = n => n.length > 6 ? 'n12' : n.length > 5 ? 'n18' : n === 'GND' ? 'n21' : 'n24';

function thPad(x, y, num, net, square, r, hole, rot) {
  const w = rot ? 57 : 2 * r;
  multi.push(square
    ? rect(x - w / 2, y - r, w, 2 * r, 'fill="#616161" stroke="#3d1148" stroke-width="2"')
    : `<circle cx="${x}" cy="${y}" r="${r}" fill="#616161" stroke="#3d1148" stroke-width="2"/>`);
  multi.push(`<circle cx="${x}" cy="${y}" r="${hole}" fill="#111"/>`);
  const t = rot ? `transform="rotate(90 ${x} ${y})"` : '';
  labels.push(txt(x, y - 7, num, 'on-grey n28', t), txt(x, y + 22, net, 'on-grey ' + netClass(net), t));
}
function header(x, y, nets, opt) {
  const { sw, r, hole, divider, rot, side, half } = opt;
  silk.push(rect(x - side, y - half, (nets.length - 1) * 88.6 + 2 * side, 2 * half, `stroke-width="${sw}"`));
  if (divider) silk.push(`<path d="M${x + 44.3} ${y - half}v${2 * half}" stroke-width="${sw}"/>`);
  nets.forEach((n, i) => thPad(x + i * 88.6, y, i + 1, n, i === 0, r, hole, rot && i === 0));
}
const HDR = { sw: 8.9, r: 30.5, hole: 19.5, divider: true, side: 44.3, half: 43.2 };
const SIG = { sw: 7.5, r: 32, hole: 20.5, side: 44, half: 44.4, rot: true };
header(1132, 950, ['A0', 'A1', 'A2', 'A3', 'A4', 'A5', 'A6/ D6/ TX'], HDR);
header(2555.6, 836, ['A7/ D7/ RX', 'D8', 'A9', 'A10', '3V3', 'GND', '5V'], HDR);
header(1442, 1955.7, ['A6/ D6/ TX', 'A7/ D7/ RX', 'GND'], HDR);
header(1264.7, 1063, ['GND', '5V', 'A1'], SIG);
header(1264.7, 1842.4, ['GND', '5V', 'A2'], SIG);
header(2323.5, 1729.3, ['$1N151', 'GND'], { ...SIG, rot: false });

/* U1 module */
const left = ['A0', 'A1', 'A2', 'A3', 'A4', 'A5', 'A6/ D6/ TX'];
const right = ['5V', 'GND', '3V3', 'A10', 'A9', 'D8', 'A7/ D7/ RX'];
const rightName = ['5V', 'GND', '3V3', '10', '9', '8', '7'];
const mask = 'fill="#ea3323" stroke="#2f0a3a" stroke-width="3"';
const pinY = i => 880.3 + i * 88.6;
for (let i = 0; i < 7; i++) {
  const y = pinY(i);
  red.push(rect(1729.5, y - 27, 142, 54, `rx="${i ? 27 : 0}" ${mask}`));
  red.push(rect(2348.5, y - 27, 142, 54, `rx="27" ${mask}`));
  [[1799.8, i + 1, left[i]], [2420, 14 - i, right[i]]].forEach(([x, n, net]) => {
    const c = net === 'GND' ? 'n21' : 'n24';
    red.push(txt(x, y - 7, n, 'on-red n28'), txt(x, y + 21, net, 'on-red ' + c));
  });
  [[1843.9, i + 1, left[i]], [2375.2, 14 - i, right[i]]].forEach(([x, n, net]) => {
    multi.push(`<circle cx="${x}" cy="${y}" r="26.5" fill="#616161"/><circle cx="${x}" cy="${y}" r="15.5" fill="#111"/>`);
    labels.push(txt(x, y - 7, n, 'on-grey n28'), txt(x, y + 21, net, 'on-grey ' + netClass(net)));
  });
  silk.push(txt(1896, y + 11, i, 'pinname', 'stroke="none"'));
  silk.push(txt(2320, y + 11, rightName[i], 'pinname', 'text-anchor="end" stroke="none"'));
}
silk.push(rect(1799.8, 791.8, 620, 709.2, 'stroke-width="8.9"'));

/* R2, LED */
const smd = (x, y, w, h) => red.push(rect(x - w / 2, y - h / 2, w, h, 'fill="#ea3323" stroke="#2f0a3a" stroke-width="2"'));
const label2 = (x, y, num, net, cls, rot, up = 6, dn = 19, nc = 'n24') => {
  const t = rot ? `transform="rotate(90 ${x} ${y})"` : '';
  red.push(txt(x, y - up, num, 'on-red ' + nc, t), txt(x, y + dn, net, 'on-red ' + cls, t));
};
smd(1717.6, 1563, 42, 61); smd(1820.5, 1563, 42, 61);
label2(1717.6, 1563, '1', 'A3', 'n21', true, 4, 17, 'n21');
label2(1820.5, 1563, '2', '$1N120', 'n18', true, 4, 15, 'n21');
smd(2101, 1563, 58, 57); smd(2206.6, 1563, 58, 57);
label2(2101, 1563, '1', '$1N120', 'n18', false, 7, 19, 'n28');
label2(2206.6, 1563, '2', 'GND', 'n21', false, 7, 20, 'n28');
silk.push('<path d="M1735 1525h-46.300v76h46.300M1803 1525h45.500v76h-45.500M2064.500 1526.500h173.500l7 10v55l-7 9h-173.500z" stroke-width="5"/>');
silk.push(rect(2254, 1536, 5, 53, 'stroke-width="2"'));

/* SW1 */
[[3171, 1635, 36, 28, '4'], [3171, 1712, 36, 28, '5'], [3425.7, 1635, 36, 28, '7'], [3425.7, 1712, 36, 28, '6']].forEach(([x, y, w, h, n]) => {
  smd(x, y, w, h); red.push(txt(x, y + 7, n, 'on-red n28'));
});
[3220, 3272.3, 3377.2].forEach(x => smd(x, 1734.500, 25, 63));
red.push(txt(3220, 1742, '3', 'on-red n24', 'transform="rotate(90 3220 1734)"'));
label2(3272.3, 1734, '2', '$1N151', 'n12', true, 3, 9, 'n12');
label2(3377.2, 1734, '1', '5V', 'n12', true, 3, 9, 'n12');
silk.push('<path d="M3196.500 1624.800h204M3178.700 1657.500v32.500M3418 1657.500v32.500M3196.500 1722.300h3M3240 1722.300h12M3292.500 1722.300h64M3397 1722.300h3" stroke-width="8.900"/>');
[3246, 3350.7].forEach(x => multi.push(`<circle cx="${x}" cy="1673.700" r="17.800" fill="#111" stroke="#666" stroke-width="1"/>`));

/* reference designators */
[[1082, 889, 'H3'], [2506, 775, 'H5'], [1216, 1003, 'S1'], [1216, 1782, 'S2'], [1392, 1895, 'H1'], [2108, 1138, 'U1'], [1684, 1510, 'R2'], [2060, 1510, 'LED'], [2273, 1668, 'PowerIN'], [3152, 1608, 'SW1']]
  .forEach(([x, y, s]) => silk.push(txt(x, y, s, 'ref', 'stroke-width="1"')));

/* unrouted nets */
const U = (i) => [1799.5, pinY(i)], V = (i) => [2420, pinY(i)];
const h3 = i => [1132 + 88.6 * i, 950], h5 = i => [2555.6 + 88.6 * i, 836];
const pairs = [];
for (const i of [0, 2, 3, 4, 5, 6]) pairs.push([h3(i), U(i)]);
for (let i = 0; i < 7; i++) pairs.push([h5(i), V(6 - i)]);
pairs.push([h3(1), [1442, 1063]], [[1442, 1063], U(1)], [[1353.3, 1063], [2375, 880]],
  [[1264.7, 1063], [1264.7, 1842]], [[1353.3, 1063], [1353.3, 1842]], [[1442, 1842], U(2)],
  [U(3), [1717.6, 1563]], [U(6), [1442, 1955.7]], [[1264.7, 1842], [1619.2, 1955.7]],
  [[2206.6, 1563], [1619.2, 1955.7]], [[2375, 1412], [1530.6, 1955.7]], [[2375, 969], [2206.6, 1563]],
  [[2206.6, 1563], [2412, 1729.3]], [[1820.5, 1563], [2101, 1563]], [[2323.5, 1729.3], [3272, 1734]], [h5(6), [3377, 1734]]);
const rats = pairs.map(([a, b]) => `M${a}L${b}`).join('');

/* rulers */
let ticks = '', rulerText = '';
for (let u = -620; u <= 3900; u += 20) {
  const x = OX + u * K;
  if (x < L || x > R) continue;
  ticks += `M${x} ${T}V${u % 200 === 0 ? 174 : u % 100 === 0 ? 183 : 188}`;
  if (u % 200 === 0) rulerText += txt(x + 2, 186, u, 'tick');
}
for (let u = 420; u >= -2060; u -= 20) {
  const y = OY - u * K;
  ticks += `M${L} ${y}H${u % 200 === 0 ? 512 : u % 100 === 0 ? 519 : 523}`;
  if (u % 200 === 0) rulerText += txt(0, 0, u, 'tick', `transform="translate(523 ${y - 1}) rotate(-90)"`);
}

document.getElementById('board-view').innerHTML = `
<defs><pattern id="dots" patternUnits="userSpaceOnUse" x="${OX}" y="${OY}" width="${10 * K}" height="${10 * K}"><rect width="1.2" height="1.2" fill="#5a5a5a"/></pattern></defs>
${rect(512, 174, 4030, 2240, 'fill="#fff"')}
${rect(L, T, R - L, B - T, 'fill="#000"')}
${rect(L, T, R - L, B - T, 'fill="url(#dots)"')}
<path d="${ticks}" stroke="#888" stroke-width="1.2" shape-rendering="crispEdges"/>${rulerText}
<path d="M2589.500 174v18M512 767.500h16" stroke="#333" stroke-width="1.500"/>
${rect(2020, 755.3, 178.3, 125.5, 'fill="#ab8f2d" stroke="#f8cd46" stroke-width="1"')}
<g>${red.join('')}</g><g class="silk">${silk.join('')}</g><g>${multi.join('')}</g><g>${labels.join('')}</g>
<path d="M${OX} 174V${B}M512 ${OY}H${R}" stroke="#b8b8b8" stroke-width="1.2"/>
<path class="rats" d="${rats}"/>`;
```
